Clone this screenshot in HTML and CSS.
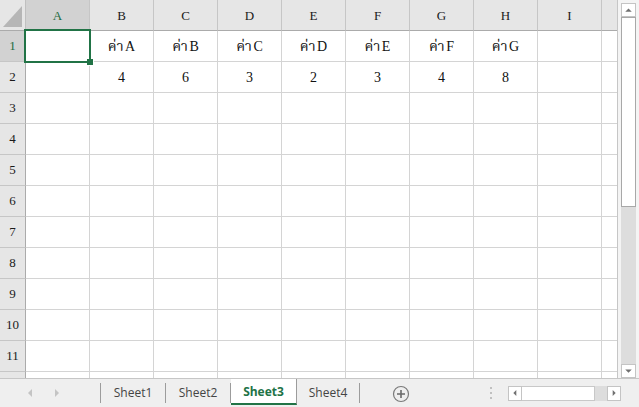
FILE: index.html
```html
<!DOCTYPE html>
<html>
<head>
<meta charset="utf-8">
<link rel="stylesheet" href="styles.css">
</head>
<body>
<div class="app">
  <div class="sheet-area">
    <div class="grid-wrap">
      <div class="grid">
        <div class="corner"><span class="tri"></span></div>
        <div class="ch sel">A</div><div class="ch">B</div><div class="ch">C</div><div class="ch">D</div><div class="ch">E</div><div class="ch">F</div><div class="ch">G</div><div class="ch">H</div><div class="ch">I</div><div class="ch last"></div>

        <div class="rh sel">1</div><div class="c"></div><div class="c">ค่า A</div><div class="c">ค่า B</div><div class="c">ค่า C</div><div class="c">ค่า D</div><div class="c">ค่า E</div><div class="c">ค่า F</div><div class="c">ค่า G</div><div class="c"></div><div class="c last"></div>
        <div class="rh">2</div><div class="c"></div><div class="c">4</div><div class="c">6</div><div class="c">3</div><div class="c">2</div><div class="c">3</div><div class="c">4</div><div class="c">8</div><div class="c"></div><div class="c last"></div>
        <div class="rh">3</div><div class="c"></div><div class="c"></div><div class="c"></div><div class="c"></div><div class="c"></div><div class="c"></div><div class="c"></div><div class="c"></div><div class="c"></div><div class="c last"></div>
        <div class="rh">4</div><div class="c"></div><div class="c"></div><div class="c"></div><div class="c"></div><div class="c"></div><div class="c"></div><div class="c"></div><div class="c"></div><div class="c"></div><div class="c last"></div>
        <div class="rh">5</div><div class="c"></div><div class="c"></div><div class="c"></div><div class="c"></div><div class="c"></div><div class="c"></div><div class="c"></div><div class="c"></div><div class="c"></div><div class="c last"></div>
        <div class="rh">6</div><div class="c"></div><div class="c"></div><div class="c"></div><div class="c"></div><div class="c"></div><div class="c"></div><div class="c"></div><div class="c"></div><div class="c"></div><div class="c last"></div>
        <div class="rh">7</div><div class="c"></div><div class="c"></div><div class="c"></div><div class="c"></div><div class="c"></div><div class="c"></div><div class="c"></div><div class="c"></div><div class="c"></div><div class="c last"></div>
        <div class="rh">8</div><div class="c"></div><div class="c"></div><div class="c"></div><div class="c"></div><div class="c"></div><div class="c"></div><div class="c"></div><div class="c"></div><div class="c"></div><div class="c last"></div>
        <div class="rh">9</div><div class="c"></div><div class="c"></div><div class="c"></div><div class="c"></div><div class="c"></div><div class="c"></div><div class="c"></div><div class="c"></div><div class="c"></div><div class="c last"></div>
        <div class="rh">10</div><div class="c"></div><div class="c"></div><div class="c"></div><div class="c"></div><div class="c"></div><div class="c"></div><div class="c"></div><div class="c"></div><div class="c"></div><div class="c last"></div>
        <div class="rh">11</div><div class="c"></div><div class="c"></div><div class="c"></div><div class="c"></div><div class="c"></div><div class="c"></div><div class="c"></div><div class="c"></div><div class="c"></div><div class="c last"></div>
        <div class="rh"></div><div class="c"></div><div class="c"></div><div class="c"></div><div class="c"></div><div class="c"></div><div class="c"></div><div class="c"></div><div class="c"></div><div class="c"></div><div class="c last"></div>
      </div>
      <div class="selection"><span class="handle"></span></div>
    </div>
    <div class="vscroll">
      <div class="sbtn"><svg width="14" height="14" viewBox="0 0 14 14"><path d="M3.5 9 L7 5.5 L10.5 9 Z" fill="#707070"/></svg></div>
      <div class="vthumb"></div>
      <div class="vtrack"></div>
      <div class="sbtn"><svg width="14" height="14" viewBox="0 0 14 14"><path d="M3.5 5.5 L7 9 L10.5 5.5 Z" fill="#707070"/></svg></div>
    </div>
  </div>
  <div class="tabbar">
    <div class="nav">
      <svg width="8" height="10" viewBox="0 0 8 10"><path d="M6 1 L2 5 L6 9 Z" fill="#c4c4c4"/></svg>
      <svg width="8" height="10" viewBox="0 0 8 10"><path d="M2 1 L6 5 L2 9 Z" fill="#c4c4c4"/></svg>
    </div>
    <div class="tabs">
      <div class="tab t1">Sheet1</div>
      <div class="tab t2">Sheet2</div>
      <div class="tab t3 active">Sheet3</div>
      <div class="tab t4">Sheet4</div>
    </div>
    <div class="add">
      <svg width="18" height="18" viewBox="0 0 18 18"><circle cx="9" cy="9" r="7.5" fill="none" stroke="#7a7a7a" stroke-width="1.2"/><path d="M9 5 V13 M5 9 H13" stroke="#6a6a6a" stroke-width="1.6"/></svg>
    </div>
    <div class="dots"><span></span><span></span><span></span></div>
    <div class="hscroll">
      <div class="hbtn"><svg width="14" height="14" viewBox="0 0 14 14"><path d="M8.5 3.5 L5 7 L8.5 10.5 Z" fill="#707070"/></svg></div>
      <div class="hthumb"></div>
      <div class="htrack"></div>
      <div class="hbtn"><svg width="14" height="14" viewBox="0 0 14 14"><path d="M5.5 3.5 L9 7 L5.5 10.5 Z" fill="#707070"/></svg></div>
    </div>
  </div>
</div>
</body>
</html>
```

FILE: styles.css
```css
html, body {
  margin: 0;
  padding: 0;
  background: #ffffff;
}
.app {
  width: 639px;
  height: 407px;
  display: flex;
  flex-direction: column;
  overflow: hidden;
}
.sheet-area {
  height: 378px;
  display: flex;
  flex: none;
}
.grid-wrap {
  position: relative;
  width: 618px;
  height: 378px;
  overflow: hidden;
  border-right: 1px solid #c6c6c6;
  box-sizing: border-box;
}
.grid {
  display: grid;
  grid-template-columns: 26px repeat(9, 64px) 16px;
  grid-template-rows: 31px repeat(11, 31px) 20px;
  font-family: "Liberation Serif", "Noto Serif Thai", "Noto Sans Thai", "Times New Roman", serif;
}
.grid > div {
  box-sizing: border-box;
  border-right: 1px solid #d4d4d4;
  border-bottom: 1px solid #d4d4d4;
  display: flex;
  align-items: center;
  justify-content: center;
}
.corner {
  background: #e6e6e6;
  position: relative;
  border-right: 1px solid #c0c0c0 !important;
  border-bottom: 1px solid #ababab !important;
}
.tri {
  position: absolute;
  right: 3px;
  bottom: 3px;
  width: 0;
  height: 0;
  border-left: 19px solid transparent;
  border-bottom: 21px solid #b6b6b6;
}
.ch {
  background: #e6e6e6;
  color: #1a1a1a;
  font-size: 13px;
  border-right: 1px solid #c6c6c6 !important;
  border-bottom: 1px solid #ababab !important;
  padding-top: 1px;
}
.rh {
  background: #e6e6e6;
  color: #1a1a1a;
  font-size: 13px;
  border-right: 1px solid #ababab !important;
  border-bottom: 1px solid #c6c6c6 !important;
}
.ch.sel, .rh.sel {
  background: #d2d2d2;
  color: #1e6b41;
}
.c {
  font-size: 14px;
  color: #111;
  padding-top: 1px;
  word-spacing: -2px;
}
.selection {
  position: absolute;
  left: 24px;
  top: 29px;
  width: 67px;
  height: 34px;
  border: 2px solid #217346;
  box-sizing: border-box;
}
.handle {
  position: absolute;
  right: -5px;
  bottom: -5px;
  width: 6px;
  height: 6px;
  background: #217346;
  border: 1px solid #ffffff;
  border-top: none;
  border-left: none;
}
.vscroll {
  width: 21px;
  display: flex;
  flex-direction: column;
  background: #f4f4f4;
  padding: 3px 3px 0 3px;
  box-sizing: border-box;
}
.sbtn {
  height: 14px;
  flex: none;
  background: #ffffff;
  border: 1px solid #c4c4c4;
  box-sizing: border-box;
  display: flex;
  align-items: center;
  justify-content: center;
}
.sbtn svg { display: block; }
.vthumb {
  height: 190px;
  flex: none;
  background: #ffffff;
  border: 1px solid #a8a8a8;
  box-sizing: border-box;
}
.vtrack {
  flex: 1;
  background: #dddddd;
}
.tabbar {
  flex: 1;
  display: flex;
  align-items: stretch;
  background: #efefef;
  border-top: 1px solid #c6c6c6;
  font-family: "Open Sans", "Noto Sans", sans-serif;
  font-size: 12px;
}
.nav {
  width: 100px;
  display: flex;
  align-items: center;
  gap: 19px;
  padding-left: 26px;
  box-sizing: border-box;
}
.nav svg { display: block; }
.tabs {
  display: flex;
  border-left: 1px solid #9c9c9c;
  margin: 4px 0 0 0;
  height: 20px;
  align-self: flex-start;
}
.tab {
  display: flex;
  align-items: center;
  justify-content: center;
  width: 65px;
  height: 20px;
  border-right: 1px solid #9c9c9c;
  color: #444444;
  padding-bottom: 2px;
  box-sizing: border-box;
}
.tab.t4 { width: 63px; }
.tab.active {
  background: #ffffff;
  color: #217346;
  font-weight: 700;
  height: 26px;
  margin-top: -4px;
  padding-top: 2px;
  border-bottom: 2px solid #217346;
  width: 66px;
}
.add {
  width: 82px;
  display: flex;
  align-items: center;
  justify-content: center;
  padding-top: 1px;
}
.add svg { display: block; }
.dots {
  width: 66px;
  display: flex;
  flex-direction: column;
  align-items: flex-end;
  justify-content: center;
  gap: 3px;
  padding-right: 16px;
  box-sizing: border-box;
}
.dots span {
  width: 2px;
  height: 2px;
  background: #c0c0c0;
  display: block;
}
.hscroll {
  display: flex;
  align-items: center;
}
.hbtn {
  width: 14px;
  height: 15px;
  background: #ffffff;
  border: 1px solid #c4c4c4;
  box-sizing: border-box;
  display: flex;
  align-items: center;
  justify-content: center;
}
.hthumb {
  width: 73px;
  height: 15px;
  background: #ffffff;
  border: 1px solid #c8c8c8;
  border-left: none;
  box-sizing: border-box;
}
.htrack {
  width: 12px;
  height: 15px;
  background: #dddddd;
}
```
